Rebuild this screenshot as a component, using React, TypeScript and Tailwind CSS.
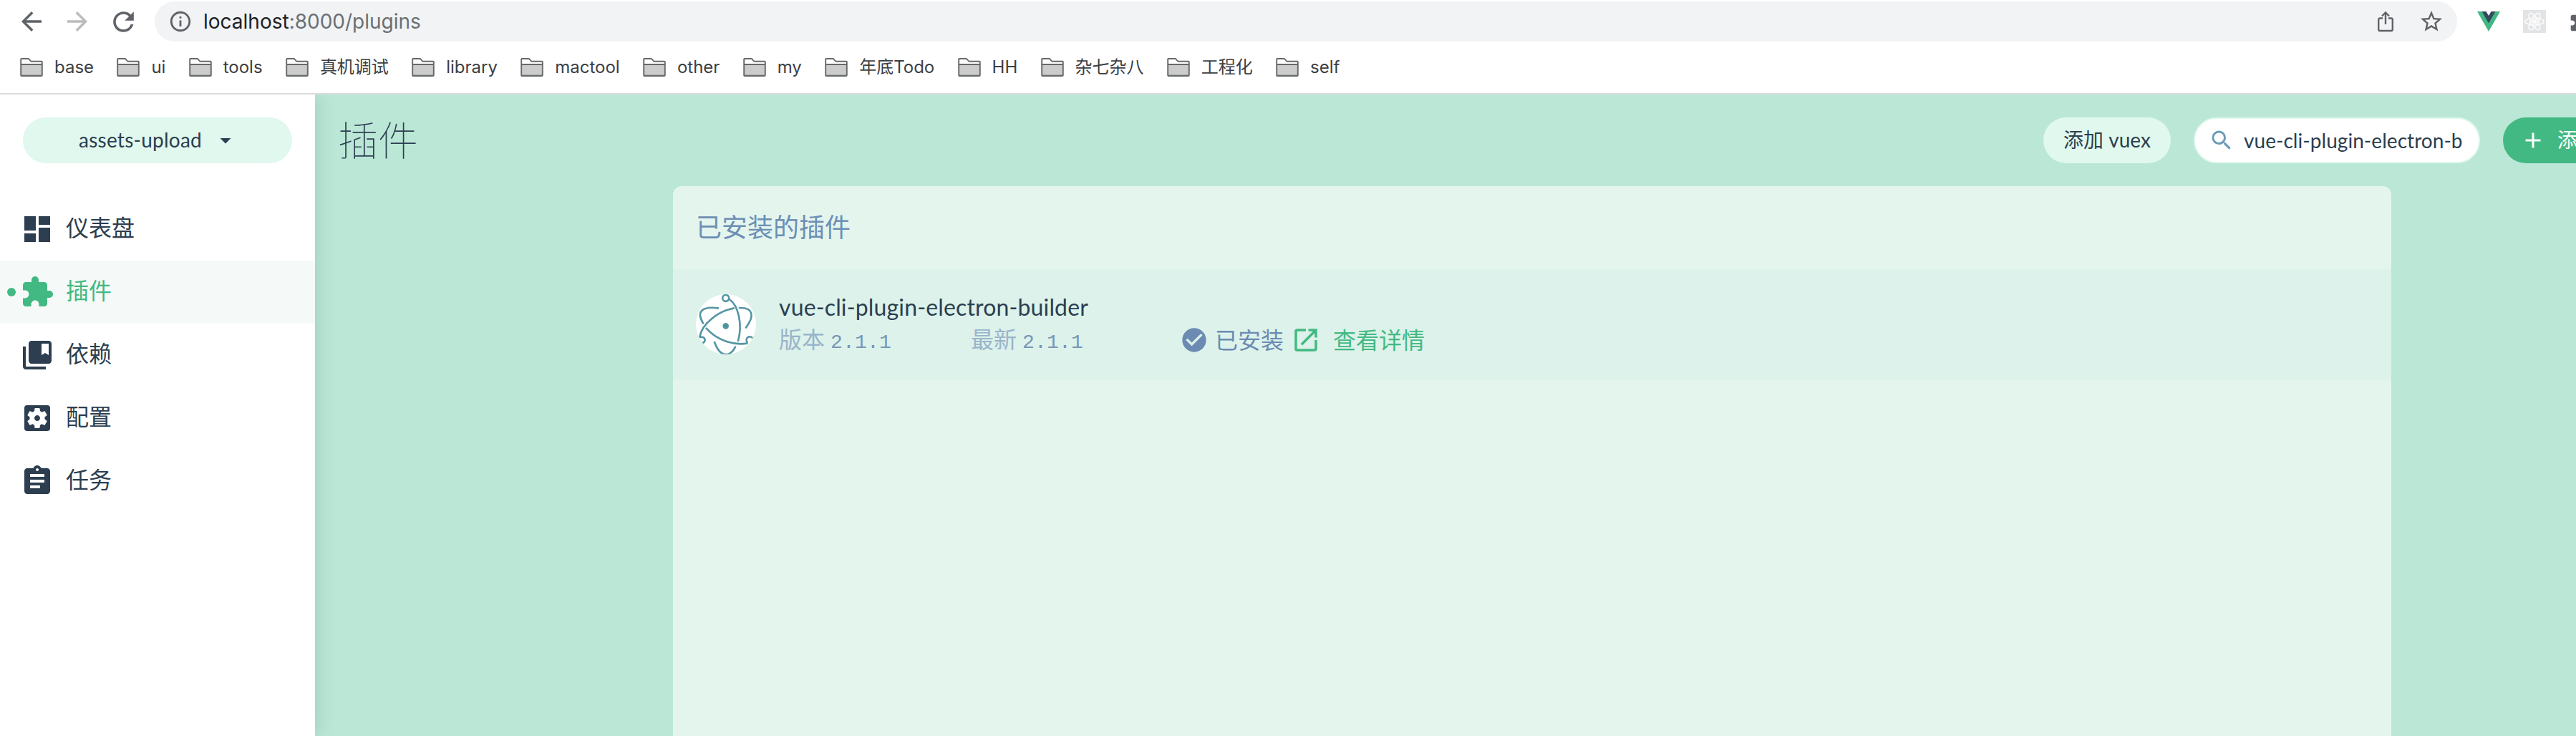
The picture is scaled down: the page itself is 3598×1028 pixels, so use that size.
import type { ReactNode } from "react";
import {
  MdAdd,
  MdArrowBack,
  MdArrowDropDown,
  MdArrowForward,
  MdAssignment,
  MdCheckCircle,
  MdCollectionsBookmark,
  MdDashboard,
  MdExtension,
  MdInfoOutline,
  MdOpenInNew,
  MdRefresh,
  MdSearch,
  MdSettingsApplications,
  MdStarBorder,
} from "react-icons/md";

const BOOKMARKS = [
  "base", "ui", "tools", "真机调试", "library", "mactool", "other",
  "my", "年底Todo", "HH", "杂七杂八", "工程化", "self",
];

const NAV = [
  { label: "仪表盘", icon: MdDashboard },
  { label: "插件", icon: MdExtension, active: true },
  { label: "依赖", icon: MdCollectionsBookmark },
  { label: "配置", icon: MdSettingsApplications },
  { label: "任务", icon: MdAssignment },
];

function FolderIcon() {
  return (
    <svg className="h-[28px] w-[32px] shrink-0" viewBox="0 0 32 28" fill="none">
      <path d="M1 10h30v15a1 1 0 0 1-1 1H2a1 1 0 0 1-1-1z" fill="#cccccc" />
      <path d="M1 24h30v2H1z" fill="#a9abab" />
      <path d="M1.2 25V2.8Q1.2 2 2 2h9.2q1 0 1.6.8l1.8 2.2q.6.8 1.600.8H30q.8 0 .8.8V25q0 1-1 1H2.200q-1 0-1-1zM1.200 10h29.600" stroke="#66696a" strokeWidth="1.9" />
    </svg>
  );
}

function ShareIcon() {
  return (
    <svg className="h-[32px] w-[24px]" viewBox="0 0 24 32" fill="none" stroke="#5f6368" strokeWidth="2.4">
      <path d="M8 11.500H4.200Q2.200 11.500 2.200 13.500V27Q2.200 29 4.200 29H19.800Q21.800 29 21.800 27V13.500Q21.800 11.500 19.800 11.500H16" />
      <path d="M12 20V4" />
      <path d="M7 8.500l5-5 5 5" />
    </svg>
  );
}

function VueLogo() {
  return (
    <svg className="h-[28px] w-[32px]" viewBox="0 0 32 28">
      <path d="M0 0h7l9 15.500L25 0h7L16 28z" fill="#41b883" />
      <path d="M6.500 0h6L16 6l3.500-6h6L16 16.500z" fill="#34495e" />
    </svg>
  );
}

function ReactLogo() {
  return (
    <svg className="h-[32px] w-[32px]" viewBox="0 0 32 32" fill="none" stroke="#fbfbfb" strokeWidth="1.700">
      <rect width="32" height="32" fill="#e2e3e4" stroke="none" />
      <ellipse cx="16" cy="16" rx="13" ry="5" />
      <ellipse cx="16" cy="16" rx="13" ry="5" transform="rotate(60 16 16)" />
      <ellipse cx="16" cy="16" rx="13" ry="5" transform="rotate(120 16 16)" />
      <circle cx="16" cy="16" r="2.400" fill="#fbfbfb" />
    </svg>
  );
}

function ElectronLogo() {
  return (
    <svg className="h-[84px] w-[84px] shrink-0 rounded-full bg-white" viewBox="36 35 252 252" fill="none" stroke="#5596a4" strokeWidth="8" strokeLinecap="round">
      <circle cx="161" cy="51" r="13.500" />
      <path d="M176 56C214 82 232 160 213 230" />
      <path d="M194 94C130 105 60 160 52 214" />
      <path d="M57 215A12.500 12.500 0 1 1 59 239" />
      <path d="M80 178C122 226 190 250 250 241" />
      <path d="M251 236A13.500 13.500 0 1 1 273 218" />
      <path d="M129 93C58 84 38 110 66 156" />
      <path d="M219 92C274 90 284 124 246 174" />
      <path d="M114 236C138 302 178 300 201 256" />
      <circle cx="161" cy="168" r="9" fill="#4a9190" />
    </svg>
  );
}

function BrowserBar() {
  return (
    <div className="relative z-20 h-[132px] border-b-2 border-[#dcdcdc] bg-white font-[Inter,'Noto_Sans_CJK_SC',sans-serif]">
      <div className="flex h-[60px] items-center">
        <div className="flex items-center gap-[22px] pl-[23px]">
          <MdArrowBack className="size-[42px] text-[#5f6368]" />
          <MdArrowForward className="size-[42px] text-[#babcbe]" />
          <MdRefresh className="size-[43px] text-[#5f6368]" />
        </div>
        <div className="ml-[22px] flex h-[56px] w-[3216px] shrink-0 items-center rounded-full bg-[#f1f3f4] pl-[19px] pr-[18px]">
          <MdInfoOutline className="size-[34px] text-[#5f6368]" />
          <span className="ml-[15px] text-[28px] leading-none text-[#6b6f73]">
            <span className="text-[#202124]">localhost</span>:8000/plugins
          </span>
          <div className="ml-auto flex items-center gap-[34px]">
            <ShareIcon />
            <MdStarBorder className="size-[36px] text-[#5f6368]" />
          </div>
        </div>
        <div className="ml-[28px] flex shrink-0 items-center gap-[32px]">
          <VueLogo />
          <ReactLogo />
          <MdExtension className="size-[32px] text-[#5f6368]" />
        </div>
      </div>
      <div className="flex h-[67px] items-center gap-[32.300px] pl-[28px]">
        {BOOKMARKS.map((name) => (
          <div key={name} className="flex items-center gap-4 text-[24px] leading-none text-[#3c4043]">
            <FolderIcon />
            <span className="whitespace-nowrap">{name}</span>
          </div>
        ))}
      </div>
    </div>
  );
}

function Sidebar() {
  return (
    <aside className="z-10 w-[440px] shrink-0 bg-white pt-8 shadow-[0_0_28px_rgba(0,50,30,0.16)]">
      <button className="mx-8 flex h-16 w-[376px] items-center rounded-full bg-[#e0f8ed] pl-[78px] text-[28px] leading-none tracking-[0.25px]">
        <span className="pb-[3px]">assets-upload</span>
        <MdArrowDropDown className="ml-[15px] size-[36px]" />
      </button>
      <nav className="mt-12">
        {NAV.map(({ label, icon: Icon, active }) => (
          <div
            key={label}
            className={
              active
                ? "flex h-[88px] items-center bg-[#f5faf8] pl-[10px] text-[#42b983]"
                : "flex h-[88px] items-center pl-[28px]"
            }
          >
            {active && <span className="mr-[6px] size-3 rounded-full bg-[#42b983]" />}
            <Icon className="size-12" />
            <span className="ml-4 pb-[5px] text-[32px] leading-none">{label}</span>
          </div>
        ))}
      </nav>
    </aside>
  );
}

function Version({ label, className }: { label: string; className: string }) {
  return (
    <span className={className}>
      <span className="text-[#9ab4cb]">{label}</span>
      <span className="ml-[8px] font-['Liberation_Mono',monospace] text-[28px] tracking-[0.2px] text-[#7796b8]">2.1.1</span>
    </span>
  );
}

function Toolbar({ children }: { children: ReactNode }) {
  return <div className="flex items-center gap-8 text-[28px] leading-none">{children}</div>;
}

export default function App() {
  return (
    <div className="h-[1028px] w-full overflow-hidden">
      <div className="flex h-full w-[3840px] flex-col font-[Lato,'Noto_Sans_CJK_SC',sans-serif] text-[#2c3e50]">
        <BrowserBar />
        <div className="flex min-h-0 flex-1">
          <Sidebar />
          <main className="flex flex-1 flex-col bg-[#bbe7d6]">
            <header className="flex h-32 shrink-0 items-center justify-between px-8">
              <h1 className="text-[56px] font-thin leading-none">插件</h1>
              <Toolbar>
                <button className="h-16 w-[178px] rounded-full bg-[#e0f8ed] pb-[3px]">添加 vuex</button>
                <label className="flex h-16 w-[400px] items-center rounded-full border-2 border-[#e0f8ed] bg-white pl-[19px]">
                  <MdSearch className="size-[36px] text-[#6b9bb8]" />
                  <span className="ml-[13px] whitespace-nowrap tracking-[0.05px]">vue-cli-plugin-electron-b</span>
                </label>
                <button className="flex h-16 w-[312px] items-center rounded-full bg-[#42b983] pl-6 text-white">
                  <MdAdd className="size-[36px]" />
                  <span className="ml-4 pb-[3px]">添加插件</span>
                </button>
              </Toolbar>
            </header>
            <section className="mx-auto w-[2400px] flex-1 rounded-t-[12px] bg-[#e4f5ee]">
              <h2 className="flex h-[116px] items-center px-8 pb-[2px] text-[36px] leading-none text-[#6c8fb4]">已安装的插件</h2>
              <div className="flex h-[154px] items-center bg-[#dcf2ea] px-8">
                <ElectronLogo />
                <div className="ml-8 flex flex-col">
                  <div className="h-[44px] text-[32px] leading-[41px] tracking-[0.15px]">vue-cli-plugin-electron-builder</div>
                  <div className="flex h-[46px] items-center whitespace-nowrap text-[32px] leading-none">
                    <Version label="版本" className="w-[268px]" />
                    <Version label="最新" className="w-[292px]" />
                    <MdCheckCircle className="size-[40px] text-[#6b8bb2]" />
                    <span className="ml-[9px] text-[#6b8bb2]">已安装</span>
                    <MdOpenInNew className="ml-[10px] size-[42px] text-[#42b983]" />
                    <span className="ml-[17px] text-[#42b983]">查看详情</span>
                  </div>
                </div>
              </div>
            </section>
          </main>
        </div>
      </div>
    </div>
  );
}
